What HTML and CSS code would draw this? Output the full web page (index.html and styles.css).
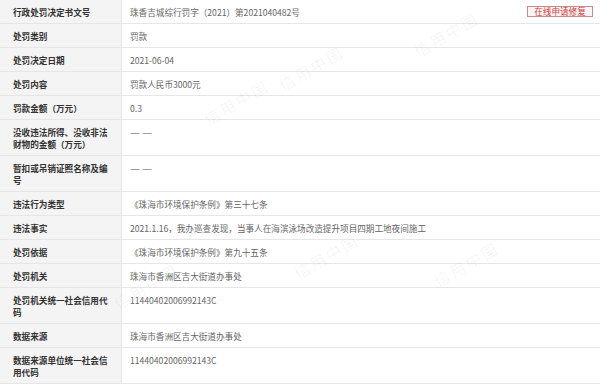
FILE: index.html
```html
<!DOCTYPE html>
<html lang="zh-CN">
<head>
<meta charset="utf-8">
<title>行政处罚信息</title>
<link rel="stylesheet" href="styles.css">
</head>
<body>
<div class="sheet">
  <div class="table">
    <div class="label">行政处罚决定书文号</div>
    <div class="value value-split"><span>珠香吉城综行罚字（2021）第2021040482号</span><span class="repair">在线申请修复</span></div>

    <div class="label">处罚类别</div>
    <div class="value">罚款</div>

    <div class="label">处罚决定日期</div>
    <div class="value">2021-06-04</div>

    <div class="label">处罚内容</div>
    <div class="value">罚款人民币3000元</div>

    <div class="label">罚款金额（万元）</div>
    <div class="value">0.3</div>

    <div class="label">没收违法所得、没收非法财物的金额（万元）</div>
    <div class="value"><span class="dash">— —</span></div>

    <div class="label">暂扣或吊销证照名称及编号</div>
    <div class="value"><span class="dash">— —</span></div>

    <div class="label">违法行为类型</div>
    <div class="value">《珠海市环境保护条例》第三十七条</div>

    <div class="label">违法事实</div>
    <div class="value">2021.1.16，我办巡查发现，当事人在海滨泳场改造提升项目四期工地夜间施工</div>

    <div class="label">处罚依据</div>
    <div class="value">《珠海市环境保护条例》第九十五条</div>

    <div class="label">处罚机关</div>
    <div class="value">珠海市香洲区吉大街道办事处</div>

    <div class="label">处罚机关统一社会信用代码</div>
    <div class="value">11440402006992143C</div>

    <div class="label">数据来源</div>
    <div class="value">珠海市香洲区吉大街道办事处</div>

    <div class="label">数据来源单位统一社会信用代码</div>
    <div class="value">11440402006992143C</div>
  </div>

  <div class="watermarks" aria-hidden="true">
    <span class="wm wm1">信用中国</span>
    <span class="wm wm2">信用中国</span>
    <span class="wm wm3">信用中国</span>
    <span class="wm wm4">信用中国</span>
    <span class="wm wm5">信用中国</span>
    <span class="wm wm6">信用中国</span>
  </div>
</div>
</body>
</html>
```

FILE: styles.css
```css
html, body {
  margin: 0;
  padding: 0;
  background: #ffffff;
}

body {
  font-family: "Noto Sans CJK SC", "Noto Sans", sans-serif;
  font-size: 8.6px;
  line-height: 12px;
  color: #555;
}

.sheet {
  position: relative;
  width: 600px;
  height: 386px;
  overflow: hidden;
}

.table {
  display: grid;
  grid-template-columns: 122px 1fr;
}

.label {
  background: #f4f4f4;
  color: #333;
  font-weight: bold;
  padding: 6px 9px 5px 13px;
  border-right: 1px solid #e6e6e6;
  border-bottom: 1px solid #e6e6e6;
}

.value {
  padding: 6px 8px 5px 8px;
  border-bottom: 1px solid #e6e6e6;
  color: #666;
}

.value-split {
  display: flex;
  justify-content: space-between;
  align-items: center;
  padding-right: 7px;
}

.repair {
  display: flex;
  align-items: center;
  justify-content: center;
  width: 64px;
  height: 9px;
  border: 1px solid #c98a8a;
  background: #fdf5f5;
  color: #cc3b3b;
  font-size: 8.6px;
  line-height: 9px;
  margin-top: -2px;
}

.dash {
  color: #888;
  font-size: 11px;
  line-height: 12px;
}

.watermarks {
  position: absolute;
  inset: 0;
  pointer-events: none;
}

.wm {
  position: absolute;
  font-size: 16px;
  font-weight: bold;
  color: rgba(0, 0, 0, 0.03);
  transform: rotate(-30deg);
  white-space: nowrap;
  letter-spacing: 2px;
}

.wm1 { left: 410px; top: 28px; }
.wm2 { left: 200px; top: 96px; }
.wm3 { left: 430px; top: 258px; }
.wm4 { left: 275px; top: 62px; }
.wm5 { left: 110px; top: 280px; }
.wm6 { left: 290px; top: 250px; }
```
